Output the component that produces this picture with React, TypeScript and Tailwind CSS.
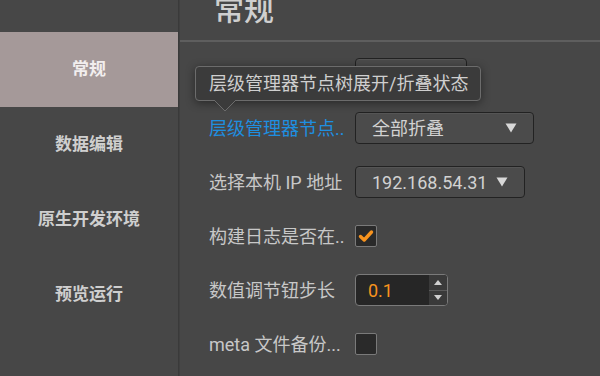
import { useState } from "react";

const NAV_ITEMS = ["常规", "数据编辑", "原生开发环境", "预览运行"];

const font = "font-['Roboto','Noto_Sans_CJK_SC',sans-serif]";

const Caret = () => (
  <svg width="12" height="10" viewBox="0 0 12 10" className="shrink-0">
    <path d="M0.5 0.5 H11.5 L6 9.5 Z" fill="#d8d8d8" />
  </svg>
);

interface SelectProps {
  value: string;
  width: string;
}

const Select = ({ value, width }: SelectProps) => (
  <div
    className={`flex items-center justify-between h-[32px] ${width} pl-[16px] pr-[16px] rounded-[4px] border border-[#222] bg-[#4b4b4b] shadow-[inset_0_1px_0_rgba(255,255,255,0.06)] text-[18px] text-[#d2d2d2]`}
  >
    <span>{value}</span>
    <Caret />
  </div>
);

const Checkbox = ({ checked }: { checked: boolean }) => (
  <div className="flex items-center justify-center w-[22px] h-[22px] rounded-[2px] border border-[#7a7a7a] bg-[#2a2a2a]">
    {checked && (
      <svg width="16" height="14" viewBox="0 0 16 14">
        <path
          d="M2.5 7.5 L6.2 11 L13.5 3"
          stroke="#f7931e"
          strokeWidth="3.4"
          fill="none"
          strokeLinecap="round"
          strokeLinejoin="round"
        />
      </svg>
    )}
  </div>
);

const NumberInput = ({ value }: { value: string }) => (
  <div className="flex h-[32px] w-[93px] rounded-[4px] border border-[#7a7a7a] bg-[#262626] overflow-hidden">
    <div className="flex-1 flex items-center pl-[12px] text-[18px] text-[#f7931e]">
      {value}
    </div>
    <div className="flex flex-col w-[18px] bg-[#3a3a3a]">
      <div className="flex-1 flex items-center justify-center border-b border-[#5a5a5a]">
        <svg width="8" height="5" viewBox="0 0 8 5">
          <path d="M0 5 L4 0 L8 5 Z" fill="#d0d0d0" />
        </svg>
      </div>
      <div className="flex-1 flex items-center justify-center">
        <svg width="8" height="5" viewBox="0 0 8 5">
          <path d="M0 0 L8 0 L4 5 Z" fill="#d0d0d0" />
        </svg>
      </div>
    </div>
  </div>
);

interface RowProps {
  label: string;
  highlight?: boolean;
  children: React.ReactNode;
}

const Row = ({ label, highlight, children }: RowProps) => (
  <div className="flex items-center h-[54px]">
    <div
      className={`w-[146px] text-[18px] whitespace-nowrap ${highlight ? "text-[#1e8fe0]" : "text-[#c8c8c8]"}`}
    >
      {label}
    </div>
    {children}
  </div>
);

const Tooltip = ({ text }: { text: string }) => (
  <div className="absolute left-[15px] top-[66px] z-10">
    <div className="relative h-[35px] w-[286px] flex items-center pl-[13px] rounded-[4px] border border-[#6c6c6c] bg-[#3b3b3b] shadow-[0_2px_10px_rgba(0,0,0,0.45)] text-[18px] text-[#cfcfcf] whitespace-nowrap">
      {text}
    </div>
    <svg
      width="22"
      height="12"
      viewBox="0 0 22 12"
      className="absolute left-[19px] top-[34px]"
    >
      <path d="M0 0 L11 11 L22 0" fill="#3b3b3b" stroke="#6c6c6c" strokeWidth="1" />
    </svg>
  </div>
);

export default function App() {
  const [active] = useState(0);

  return (
    <div className={`flex h-[376px] w-[600px] overflow-hidden bg-[#474747] ${font}`}>
      <div className="flex flex-col w-[179px] pt-[32px] border-r border-[#3a3a3a] bg-[#474747]">
        {NAV_ITEMS.map((item, i) => (
          <div
            key={item}
            className={`flex items-center justify-center h-[75px] text-[17px] font-bold ${
              i === active ? "bg-[#a59999] text-[#f2eeee]" : "text-[#cfcfcf]"
            }`}
          >
            {item}
          </div>
        ))}
      </div>

      <div className="relative flex flex-col flex-1 border-l border-[#404040]">
        <div className="h-[42px] border-b-2 border-[#5e5e5e] pl-[34px] overflow-hidden">
          <div className="mt-[-10px] text-[30px] leading-[40px] font-medium text-[#cfcfcf]">
            常规
          </div>
        </div>

        <div className="flex flex-col pt-[5px] pl-[29px]">
          <Row label="">
            <Select value="" width="w-[112px]" />
          </Row>
          <Row label="层级管理器节点.." highlight>
            <Select value="全部折叠" width="w-[179px]" />
          </Row>
          <Row label="选择本机 IP 地址">
            <Select value="192.168.54.31" width="w-[170px]" />
          </Row>
          <Row label="构建日志是否在..">
            <Checkbox checked />
          </Row>
          <Row label="数值调节钮步长">
            <NumberInput value="0.1" />
          </Row>
          <Row label="meta 文件备份...">
            <Checkbox checked={false} />
          </Row>
        </div>

        <Tooltip text="层级管理器节点树展开/折叠状态" />
      </div>
    </div>
  );
}
